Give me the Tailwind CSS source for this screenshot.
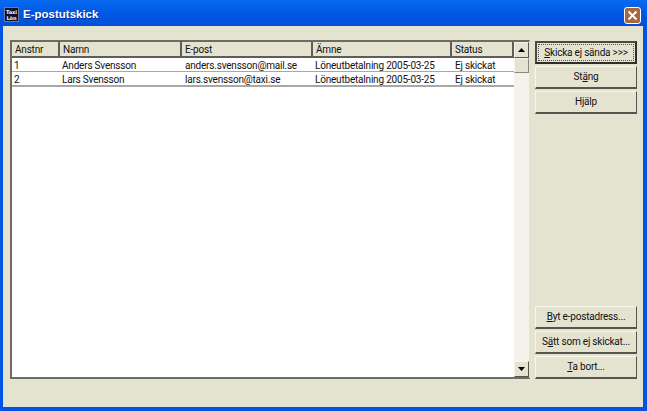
<!DOCTYPE html>
<html lang="en">
  <head>
    <meta charset="UTF-8" />
    <title>E-postutskick</title>
    <script src="https://cdn.jsdelivr.net/npm/@tailwindcss/browser@4"></script>
  </head>
  <body class="w-[647px] h-[411px] overflow-hidden bg-[#0055e5] font-['Roboto',sans-serif] text-[10px] tracking-[-0.2px] leading-[13px] text-[#111] whitespace-nowrap">
    <div class="flex flex-col h-full">
      <!-- Title bar -->
      <div class="h-[26px] shrink-0 flex items-center pl-[4px] pr-[6px] pt-[3px] bg-gradient-to-b from-[#0a6af0] via-[#0058e6] to-[#0250d8]">
        <div class="w-[15px] h-[15px] bg-[#0a1030] border border-[#6c7a9c] text-white text-[5px] tracking-normal leading-[6px] font-bold text-center pt-[1px] font-['DejaVu_Sans',sans-serif]">
          <div>Taxi</div>
          <div>Lön</div>
        </div>
        <span class="ml-[4px] text-white text-[11.5px] tracking-normal font-bold font-['Liberation_Sans',sans-serif] [text-shadow:1px_1px_0_#0a2a90]">E-postutskick</span>
        <div class="ml-auto mt-[1px] w-[17px] h-[17px] rounded-[3px] bg-[#a9663a] border border-white flex items-center justify-center">
          <svg width="11" height="11" viewBox="0 0 11 11"><path d="M1.5 1.5 9.5 9.5M9.5 1.5 1.5 9.5" stroke="#fff" stroke-width="2" fill="none"/></svg>
        </div>
      </div>

      <!-- Window body -->
      <div class="flex-1 flex ml-[3px] mr-[4px] mb-[4px] bg-[#e4e3d0] pl-[7px] pt-[14px] pb-[28px] pr-[6px]">
        <!-- List -->
        <div class="w-[520px] flex bg-white border-l-2 border-t-2 border-[#6d6b62] border-b-2 border-r border-r-[#e4e3d0]">
          <div class="flex-1 flex flex-col">
            <div class="h-[14px] flex bg-[#e4e3d0] border-b-2 border-[#5f5d55] box-content">
              <div class="w-[48px] pl-[3px] pt-[1px] border-r-2 border-[#5f5d55]">Anstnr</div>
              <div class="w-[122px] pl-[3px] pt-[1px] border-r-2 border-[#5f5d55]">Namn</div>
              <div class="w-[131px] pl-[3px] pt-[1px] border-r-2 border-[#5f5d55]">E-post</div>
              <div class="w-[139px] pl-[3px] pt-[1px] border-r-2 border-[#5f5d55]">Ämne</div>
              <div class="w-[62px] pl-[3px] pt-[1px] border-r-2 border-[#5f5d55]">Status</div>
            </div>
            <div class="h-[14px] pt-[1px] flex items-center border-b border-[#a8a8a8]">
              <div class="w-[48px] pl-[2px]">1</div>
              <div class="w-[122px] pl-[2px]">Anders Svensson</div>
              <div class="w-[131px] pl-[3px]">anders.svensson@mail.se</div>
              <div class="w-[139px] pl-[2px]">Löneutbetalning 2005-03-25</div>
              <div class="w-[62px] pl-[3px]">Ej skickat</div>
            </div>
            <div class="h-[15px] pt-[1px] flex items-center border-b-2 border-[#a8a8a8]">
              <div class="w-[48px] pl-[2px]">2</div>
              <div class="w-[122px] pl-[2px]">Lars Svensson</div>
              <div class="w-[131px] pl-[3px]">lars.svensson@taxi.se</div>
              <div class="w-[139px] pl-[2px]">Löneutbetalning 2005-03-25</div>
              <div class="w-[62px] pl-[3px]">Ej skickat</div>
            </div>
          </div>
          <!-- Scrollbar -->
          <div class="w-[15px] flex flex-col bg-[#f3f3ec]">
            <div class="h-[16px] bg-[#e4e3d0] border border-t-[#f4f4ea] border-l-[#f4f4ea] border-r-[#55544e] border-b-[#55544e] flex items-center justify-center">
              <svg width="7" height="4" viewBox="0 0 7 4"><path d="M3.5 0 7 4H0Z" fill="#000"/></svg>
            </div>
            <div class="h-[15px] bg-[#e4e3d0] border border-t-[#f4f4ea] border-l-[#f4f4ea] border-r-[#8a887c] border-b-[#8a887c]"></div>
            <div class="flex-1"></div>
            <div class="h-[16px] bg-[#e4e3d0] border border-t-[#f4f4ea] border-l-[#f4f4ea] border-r-[#55544e] border-b-[#55544e] flex items-center justify-center">
              <svg width="7" height="4" viewBox="0 0 7 4"><path d="M0 0H7L3.5 4Z" fill="#000"/></svg>
            </div>
          </div>
        </div>

        <!-- Buttons -->
        <div class="ml-[5px] w-[102px] flex flex-col pt-[1px]">
          <div class="h-[23px] flex items-center justify-center bg-[#e4e3d0] border-2 border-[#2e2d29] border-t-[#4a4942] border-l-[#4a4942] p-[1px]">
            <div class="w-full h-full flex items-center justify-center border border-dotted border-[#555] pb-[1px]"><span><u>S</u>kicka ej sända &gt;&gt;&gt;</span></div>
          </div>
          <div class="h-[23px] mt-[2px] pb-[1px] flex items-center justify-center bg-[#e4e3d0] border border-t-[#f6f6ec] border-l-[#f6f6ec] border-r-[#55544e] border-b-[#55544e] border-b-2"><span>St<u>ä</u>ng</span></div>
          <div class="h-[23px] mt-[2px] pb-[1px] flex items-center justify-center bg-[#e4e3d0] border border-t-[#f6f6ec] border-l-[#f6f6ec] border-r-[#55544e] border-b-[#55544e] border-b-2">Hjälp</div>
          <div class="mt-auto h-[23px] pb-[1px] flex items-center justify-center bg-[#e4e3d0] border border-t-[#f6f6ec] border-l-[#f6f6ec] border-r-[#55544e] border-b-[#55544e] border-b-2"><span><u>B</u>yt e-postadress...</span></div>
          <div class="h-[23px] mt-[2px] pb-[1px] flex items-center justify-center bg-[#e4e3d0] border border-t-[#f6f6ec] border-l-[#f6f6ec] border-r-[#55544e] border-b-[#55544e] border-b-2"><span>S<u>ä</u>tt som ej skickat...</span></div>
          <div class="h-[23px] mt-[2px] pb-[1px] flex items-center justify-center bg-[#e4e3d0] border border-t-[#f6f6ec] border-l-[#f6f6ec] border-r-[#55544e] border-b-[#55544e] border-b-2"><span><u>T</u>a bort...</span></div>
        </div>
      </div>
    </div>
  </body>
</html>
